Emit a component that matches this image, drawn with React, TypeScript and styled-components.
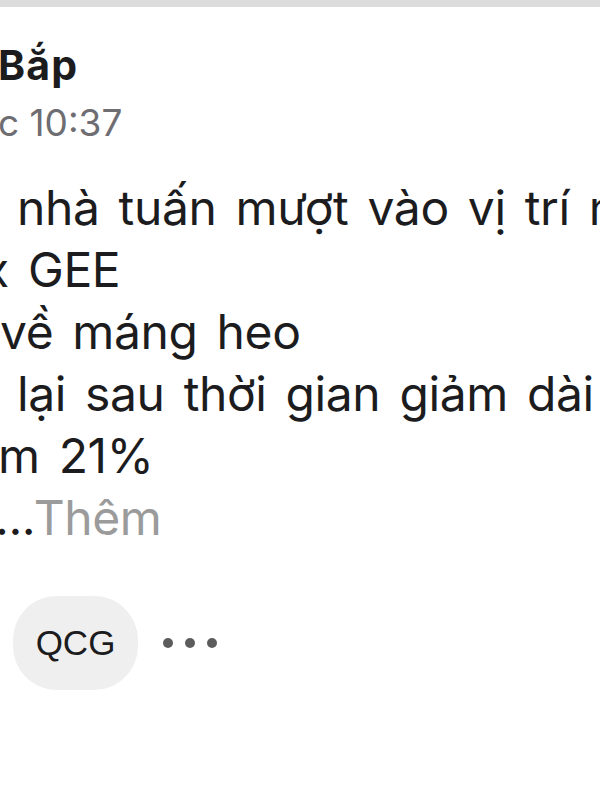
import styled, { createGlobalStyle } from 'styled-components';

const GlobalStyle = createGlobalStyle`
  html, body {
    margin: 0;
    padding: 0;
    background: #ffffff;
    overflow: hidden;
  }
  body {
    font-family: Inter, "Noto Sans", sans-serif;
    color: #1c1c1e;
  }
`;

// the screenshot is cropped on the left, so every line keeps its hidden start
type Line = { lead: string; text: string; indent: number };

const lines: Line[] = [
  { lead: 'Cổ phiếu ', text: 'nhà tuấn mượt vào vị trí nhất', indent: 17 },
  { lead: 'Top 3 x ', text: 'GEE', indent: 28 },
  { lead: 'Đi ', text: 'về máng heo', indent: 0 },
  { lead: 'Tăng ', text: 'lại sau thời gian giảm dài hạn', indent: 17 },
  { lead: 'Tăng ', text: 'm 21%', indent: -2 },
];

function App() {
  return (
    <>
      <GlobalStyle />
      <Page>
        <TopBar />
        <Post>
          <Author>
            <Lead>Tin </Lead>Bắp
          </Author>
          <Time>
            <Lead>Lú</Lead>c 10:37
          </Time>
          <Body>
            {lines.map((line, i) => (
              <Row key={i} $indent={line.indent}>
                <Lead>{line.lead}</Lead>
                {line.text}
              </Row>
            ))}
            <Row $indent={-5}>
              <Lead>giả</Lead>...<More>Thêm</More>
            </Row>
          </Body>
          <Actions>
            <Chip>QCG</Chip>
            <Dots>
              <Dot />
              <Dot />
              <Dot />
            </Dots>
          </Actions>
        </Post>
      </Page>
    </>
  );
}

const Page = styled.div`
  width: 600px;
  height: 800px;
  overflow: hidden;
  background: #ffffff;
`;

const TopBar = styled.div`
  height: 7px;
  background: #dcdcdc;
`;

const Post = styled.div`
  display: flex;
  flex-direction: column;
`;

const Lead = styled.span`
  position: absolute;
  right: 100%;
  white-space: pre;
`;

const Author = styled.div`
  position: relative;
  margin-top: 34px;
  margin-left: -2px;
  font-size: 41px;
  line-height: 48px;
  font-weight: 700;
  letter-spacing: 1.2px;
  color: #1c1c1e;
  white-space: nowrap;
`;

const Time = styled.div`
  position: relative;
  margin-top: 10px;
  margin-left: -2px;
  font-size: 37px;
  line-height: 48px;
  color: #6d6d72;
  white-space: nowrap;
`;

const Body = styled.div`
  margin-top: 30px;
  display: flex;
  flex-direction: column;
`;

const Row = styled.div<{ $indent: number }>`
  position: relative;
  margin-left: ${(p) => p.$indent}px;
  font-size: 48px;
  line-height: 62px;
  letter-spacing: -0.4px;
  word-spacing: 6px;
  white-space: nowrap;
  color: #1c1c1e;
`;

const More = styled.span`
  color: #9b9b9b;
`;

const Actions = styled.div`
  margin-top: 47px;
  margin-left: 13px;
  display: flex;
  align-items: center;
  gap: 25px;
`;

const Chip = styled.div`
  width: 125px;
  height: 94px;
  border-radius: 44px;
  background: #efefef;
  display: flex;
  align-items: center;
  justify-content: center;
  font-family: "Liberation Sans", Arial, sans-serif;
  font-size: 35px;
  color: #1c1c1e;
`;

const Dots = styled.div`
  display: flex;
  gap: 12px;
`;

const Dot = styled.span`
  width: 10px;
  height: 10px;
  border-radius: 50%;
  background: #5c5c5c;
`;

export default App;
